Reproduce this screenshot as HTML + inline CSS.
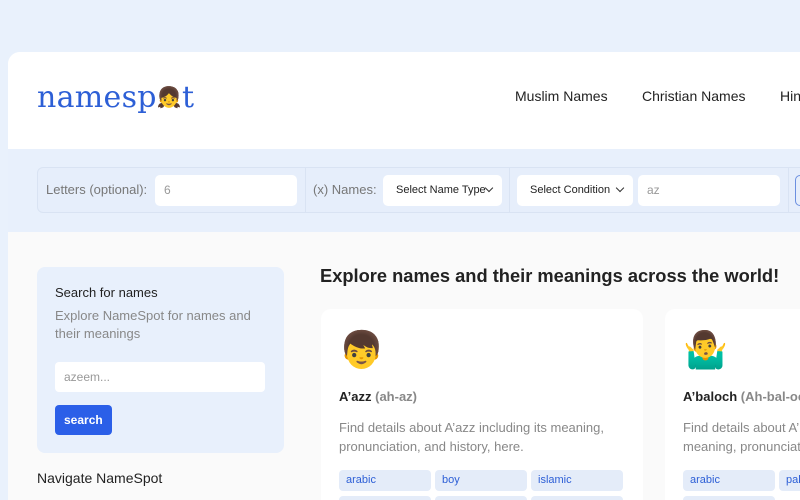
<!DOCTYPE html>
<html><head><meta charset="utf-8"><style>
*{box-sizing:border-box;margin:0;padding:0}
html,body{width:800px;height:500px;overflow:hidden}
body{background:#e9f1fc;font-family:"Liberation Sans",sans-serif;position:relative}
.panel{position:absolute;left:8px;top:52px;width:792px;height:448px;background:#fafafa;border-radius:12px 0 0 0;overflow:hidden}
.hdr{position:absolute;left:0;top:0;width:100%;height:97px;background:#fff}
.logo{position:absolute;left:29px;top:28px;font-family:"DejaVu Serif",serif;font-size:30px;color:#2d5fd6;letter-spacing:0.3px}
.nav{position:absolute;top:36px;font-size:14px;color:#222}
.band{position:absolute;left:0;top:97px;width:100%;height:83px;background:#e8f0fc}
.fbox{position:absolute;left:29px;top:18px;width:800px;height:46px;border:1px solid #d9e3f3;border-radius:6px;background:#e6eefb}
.lbl{position:absolute;top:14px;font-size:13px;color:#777}
.inp{position:absolute;top:7px;height:31px;background:#fff;border-radius:5px;font-size:12px;color:#999;padding:8px 9px;white-space:nowrap}
.sel{color:#222;font-size:11px;padding-top:9px;padding-left:13px}
.arr{position:absolute;right:10px;top:10px;width:6px;height:6px;border-right:1.3px solid #333;border-bottom:1.3px solid #333;transform:rotate(45deg)}
.sep{position:absolute;top:0;width:1px;height:44px;background:#d9e3f3}
.side{position:absolute;left:29px;top:215px;width:247px;height:186px;background:#e8f0fc;border-radius:8px}
h1{position:absolute;left:312px;top:213px;font-size:18.3px;font-weight:bold;color:#222;white-space:nowrap}
.card{position:absolute;top:257px;width:322px;height:200px;background:#fff;border-radius:10px}
.emo{position:absolute;left:18px;top:20px;font-size:36px}
.nm{position:absolute;left:18px;top:80px;font-size:13px;font-weight:bold;color:#222;white-space:nowrap}
.nm span{color:#888}
.ds{position:absolute;left:18px;top:109px;font-size:13px;line-height:19px;color:#888;width:290px}
.tag{position:absolute;top:161px;width:92px;height:21px;background:#e4ecf9;border-radius:4px;font-size:11px;color:#2d5fd6;padding:4px 7px}
</style></head><body>
<div class="panel">
 <div class="hdr">
  <div class="logo">namesp<span style="font-size:20px;vertical-align:3px">👧</span>t</div>
  <div class="nav" style="left:507px">Muslim Names</div>
  <div class="nav" style="left:634px">Christian Names</div>
  <div class="nav" style="left:772px">Hindu</div>
 </div>
 <div class="band">
  <div class="fbox">
   <div class="lbl" style="left:8px">Letters (optional):</div>
   <div class="inp" style="left:117px;width:142px">6</div>
   <div class="sep" style="left:267px"></div>
   <div class="lbl" style="left:275px">(x) Names:</div>
   <div class="inp sel" style="left:345px;width:119px">Select Name Type<div class="arr"></div></div>
   <div class="sep" style="left:471px"></div>
   <div class="inp sel" style="left:479px;width:116px">Select Condition<div class="arr"></div></div>
   <div class="inp" style="left:600px;width:142px">az</div>
   <div class="sep" style="left:750px"></div>
   <div style="position:absolute;left:757px;top:7px;width:20px;height:31px;border:1.5px solid #6b8fe0;border-radius:5px"></div>
  </div>
 </div>
 <div class="side">
  <div style="position:absolute;left:18px;top:18px;font-size:13px;color:#222">Search for names</div>
  <div style="position:absolute;left:18px;top:40px;font-size:13px;line-height:18px;color:#888;width:215px">Explore NameSpot for names and their meanings</div>
  <div style="position:absolute;left:18px;top:95px;width:210px;height:30px;background:#fff;border-radius:4px;font-size:12px;color:#999;padding:8px 9px">azeem...</div>
  <div style="position:absolute;left:18px;top:138px;width:57px;height:30px;background:#2b5fe8;border-radius:4px;font-size:12px;font-weight:bold;color:#fff;padding:8px 9px">search</div>
 </div>
 <div style="position:absolute;left:29px;top:418px;font-size:14px;color:#222">Navigate NameSpot</div>
 <h1>Explore names and their meanings across the world!</h1>
 <div class="card" style="left:313px">
  <div class="emo">👦</div>
  <div class="nm">A’azz <span>(ah-az)</span></div>
  <div class="ds">Find details about A’azz including its meaning, pronunciation, and history, here.</div>
  <div class="tag" style="left:18px">arabic</div>
  <div class="tag" style="left:114px">boy</div>
  <div class="tag" style="left:210px">islamic</div>
  <div class="tag" style="left:18px;top:187px"></div><div class="tag" style="left:114px;top:187px"></div><div class="tag" style="left:210px;top:187px"></div>
 </div>
 <div class="card" style="left:657px">
  <div class="emo">🤷‍♂️</div>
  <div class="nm">A’baloch <span>(Ah-bal-och)</span></div>
  <div class="ds" style="width:150px;white-space:nowrap">Find details about A’baloch<br>meaning, pronunciation</div>
  <div class="tag" style="left:18px">arabic</div>
  <div class="tag" style="left:114px">pakistani</div>
  <div class="tag" style="left:18px;top:187px"></div>
 </div>
</div>
</body></html>
